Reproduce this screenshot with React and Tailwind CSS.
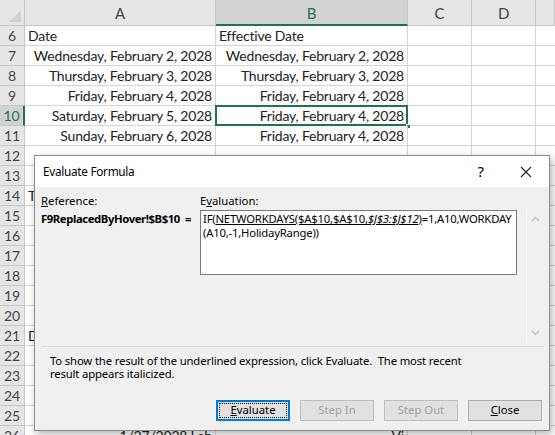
import React from 'react';

const cols = ['A', 'B', 'C', 'D', ''];

const rows = [
  { n: 6, a: 'Date', b: 'Effective Date', left: true },
  { n: 7, a: 'Wednesday, February 2, 2028', b: 'Wednesday, February 2, 2028' },
  { n: 8, a: 'Thursday, February 3, 2028', b: 'Thursday, February 3, 2028' },
  { n: 9, a: 'Friday, February 4, 2028', b: 'Friday, February 4, 2028' },
  { n: 10, a: 'Saturday, February 5, 2028', b: 'Friday, February 4, 2028', active: true },
  { n: 11, a: 'Sunday, February 6, 2028', b: 'Friday, February 4, 2028' },
  { n: 12 },
  { n: 13 },
  { n: 14, a: 'T', left: true },
  { n: 15 },
  { n: 16 },
  { n: 17 },
  { n: 18 },
  { n: 19 },
  { n: 20 },
  { n: 21, a: 'D', left: true },
  { n: 22 },
  { n: 23 },
  { n: 24 },
  { n: 25 },
  { n: 26, a: '1/27/2028 Lab', b: 'Vi' },
];

const cellFont = { fontFamily: 'Lato, "Open Sans", sans-serif' };
const uiFont = { fontFamily: '"Noto Sans", "Open Sans", sans-serif' };

function Sheet() {
  return (
    <div className="grid grid-cols-[25px_191px_192px_64px_64px_1fr] text-[14px] tracking-[-0.2px] text-[#222]" style={cellFont}>
      {/* header row */}
      <div className="relative h-[26px] bg-[#e6e6e6] border-r border-b border-[#c6c6c6]">
        <svg className="absolute right-[3px] bottom-[3px]" width="12" height="12" viewBox="0 0 12 12">
          <polygon points="12,0 12,12 0,12" fill="#d2d2d2" />
        </svg>
      </div>
      {cols.map((c, i) => (
        <div
          key={i}
          className={
            c === 'B'
              ? 'h-[26px] bg-[#d2d2d2] border-r border-[#c6c6c6] border-b-2 border-b-[#217346] text-[#217346] flex items-center justify-center pt-[2px] text-[15px]'
              : 'h-[26px] bg-[#e6e6e6] border-r border-b border-[#c6c6c6] text-[#444] flex items-center justify-center pt-[2px] text-[15px]'
          }
        >
          {c}
        </div>
      ))}
      {rows.map((r) => (
        <React.Fragment key={r.n}>
          <div
            className={
              r.active
                ? 'h-[20px] bg-[#d2d2d2] border-r-2 border-r-[#217346] border-b border-[#c6c6c6] text-[#217346] flex items-center justify-center text-[14px]'
                : 'h-[20px] bg-[#e6e6e6] border-r border-b border-[#c6c6c6] text-[#444] flex items-center justify-center text-[14px]'
            }
          >
            {r.n}
          </div>
          <div
            className={
              'h-[20px] border-r border-b border-[#d4d4d4] bg-white flex items-center whitespace-nowrap ' +
              (r.left ? 'justify-start pl-[3px]' : 'justify-end pr-[3px]')
            }
          >
            {r.a}
          </div>
          <div
            className={
              'relative h-[20px] border-r border-b border-[#d4d4d4] bg-white flex items-center whitespace-nowrap ' +
              (r.left ? 'justify-start pl-[3px]' : 'justify-end pr-[3px]')
            }
          >
            {r.b}
            {r.active && (
              <>
                <div className="absolute -left-[1px] -top-[1px] -right-[1px] -bottom-[1px] border-2 border-[#217346]" />
                <div className="absolute -right-[4px] -bottom-[4px] w-[5px] h-[5px] bg-[#217346] border border-white" />
              </>
            )}
          </div>
          <div className="h-[20px] border-r border-b border-[#d4d4d4] bg-white" />
          <div className="h-[20px] border-r border-b border-[#d4d4d4] bg-white" />
          <div className="h-[20px] border-b border-[#d4d4d4] bg-white" />
        </React.Fragment>
      ))}
    </div>
  );
}

function Btn({ children, primary, disabled }) {
  if (primary) {
    return (
      <div className="w-[74px] h-[21px] border-2 border-[#0078d7] bg-[#e1e1e1] p-[1px]">
        <div className="h-full border border-dotted border-black flex items-center justify-center text-black">
          {children}
        </div>
      </div>
    );
  }
  return (
    <div
      className={
        'w-[74px] h-[21px] border flex items-center justify-center ' +
        (disabled ? 'border-[#bfbfbf] bg-[#e1e1e1] text-[#a0a0a0]' : 'border-[#adadad] bg-[#e1e1e1] text-black')
      }
    >
      {children}
    </div>
  );
}

function Dialog() {
  return (
    <div
      className="absolute left-[34px] top-[155px] w-[516px] h-[276px] bg-[#f0f0f0] border border-[#8c8c8c] shadow-[2px_3px_8px_rgba(0,0,0,0.3)] text-[11.3px] text-black flex flex-col"
      style={uiFont}
    >
      <div className="h-[31px] bg-white flex items-center pl-[8px] pr-[14px] text-[11.8px]">
        <span className="flex-1 tracking-[-0.3px]">Evaluate Formula</span>
        <span className="text-[15px] mr-[36px]">?</span>
        <svg width="12" height="12" viewBox="0 0 12 12" className="mr-[3px]">
          <path d="M1 1L11 11M11 1L1 11" stroke="#222" strokeWidth="1.1" />
        </svg>
      </div>
      <div className="flex-1 flex flex-col px-[6px]">
        <div className="flex mt-[6px]">
          <div className="w-[159px] shrink-0 flex flex-col">
            <div className="h-[16px] leading-[16px]">
              <span className="underline">R</span>eference:
            </div>
            <div className="h-[18px] leading-[18px] font-bold mt-[1px] whitespace-nowrap tracking-[-0.4px]">
              F9ReplacedByHover!$B$10&nbsp;&nbsp;=
            </div>
          </div>
          <div className="flex flex-col shrink-0">
            <div className="h-[16px] leading-[16px]">
              E<span className="underline">v</span>aluation:
            </div>
            <div className="w-[317px] h-[65px] bg-white border border-[#7a7a7a] mt-[1px] pl-[2px] pt-[1px] leading-[14px] whitespace-nowrap tracking-[-0.2px]">
              IF(<span className="underline">NETWORKDAYS($A$10,$A$10,<i>$J$3:$J$12</i>)</span>=1,A10,WORKDAY
              <br />
              (A10,-1,HolidayRange))
            </div>
          </div>
          <div className="ml-[9px] mt-[16px] w-[17px] shrink-0 h-[134px] border-l border-[#fbfbfb] flex flex-col items-center justify-between py-[7px]">
            <svg width="9" height="6" viewBox="0 0 9 6">
              <path d="M1 5L4.5 1.5L8 5" stroke="#c4c4c4" strokeWidth="1.5" fill="none" />
            </svg>
            <svg width="9" height="6" viewBox="0 0 9 6">
              <path d="M1 1L4.5 4.5L8 1" stroke="#c4c4c4" strokeWidth="1.5" fill="none" />
            </svg>
          </div>
        </div>
        <div className="h-[1px] bg-[#d9d9d9] mt-[3px] ml-[1px]" />
        <div className="pl-[9px] mt-[7px] leading-[13px] tracking-[-0.15px]">
          To show the result of the underlined expression, click Evaluate.&nbsp; The most recent
          <br />
          result appears italicized.
        </div>
        <div className="flex justify-end gap-[10px] mt-auto mb-[9px] pr-[1px]">
          <Btn primary>
            <span className="underline">E</span>valuate
          </Btn>
          <Btn disabled>Step In</Btn>
          <Btn disabled>Step Out</Btn>
          <Btn>
            <span className="underline">C</span>lose
          </Btn>
        </div>
      </div>
    </div>
  );
}

export default function App() {
  return (
    <div className="relative w-[555px] h-[435px] overflow-hidden bg-white">
      <Sheet />
      <Dialog />
    </div>
  );
}
